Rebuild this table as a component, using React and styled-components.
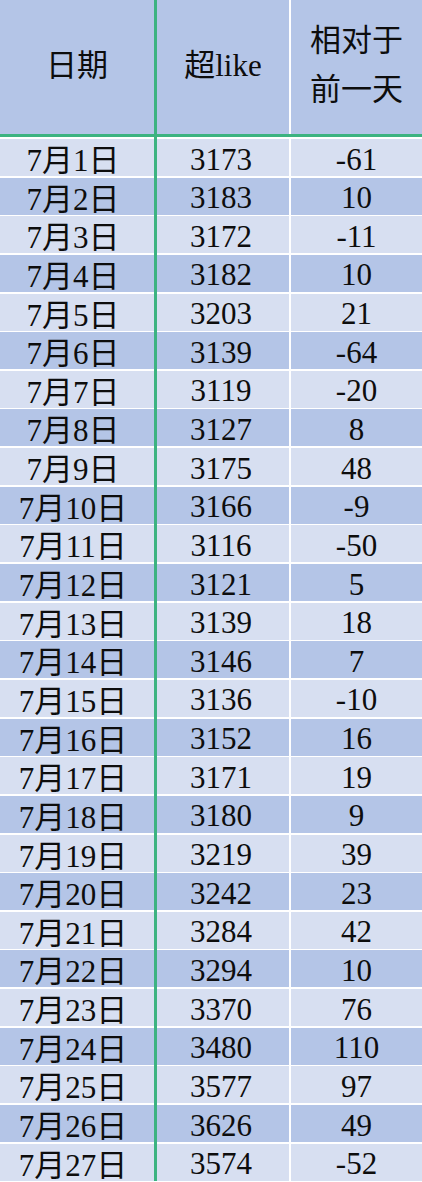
import React from "react";
import styled, { createGlobalStyle } from "styled-components";

const GREEN = "#3cb381";
const DARK = "#b4c5e7";
const LIGHT = "#d7dff1";

const Global = createGlobalStyle`
  html, body { margin: 0; padding: 0; background: #ffffff; }
  body { width: 422px; height: 1182px; overflow: hidden; }
`;

const Table = styled.div`
  width: 422px;
  display: grid;
  row-gap: 2px;
  background: linear-gradient(90deg, #ffffff 0 154px, ${GREEN} 154px 157px, #ffffff 157px);
  font-family: "Liberation Serif", "Noto Sans CJK SC", serif;
  color: #0d0d0d;
`;

const HeaderRow = styled.div`
  display: grid;
  grid-template-columns: 157px 134px 1fr;
  height: 134px;
  border-bottom: 3px solid ${GREEN};
`;

const Row = styled.div`
  display: grid;
  grid-template-columns: 157px 134px 1fr;
  height: 36.65px;
`;

const Cell = styled.div`
  box-sizing: border-box;
  display: flex;
  align-items: center;
  justify-content: center;
  text-align: center;
  background: ${(p) => p.$bg};
  border-right: ${(p) => (p.$divider ? `${p.$divider.w}px solid ${p.$divider.c}` : "none")};
  font-size: 31px;
  white-space: nowrap;
  min-width: 0;
`;

const HeadCell = styled(Cell)`
  padding-bottom: 6px;
`;

const DataCell = styled(Cell)`
  padding-top: 3px;
  padding-right: ${(p) => p.$pr || 0}px;
`;

const HeadText = styled.span`
  line-height: 46px;
`;

const Text = styled.span`
  font-family: "Liberation Serif", serif;
  line-height: 1;
`;

const Han = styled.span`
  font-family: "Noto Sans CJK SC", sans-serif;
`;

const HanInline = styled(Han)`
  display: inline-block;
  line-height: 1;
`;

const Latin = styled.span`
  font-family: "Liberation Serif", serif;
`;

const data = [
  [3173, -61], [3183, 10], [3172, -11], [3182, 10], [3203, 21], [3139, -64],
  [3119, -20], [3127, 8], [3175, 48], [3166, -9], [3116, -50], [3121, 5],
  [3139, 18], [3146, 7], [3136, -10], [3152, 16], [3171, 19], [3180, 9],
  [3219, 39], [3242, 23], [3284, 42], [3294, 10], [3370, 76], [3480, 110],
  [3577, 97], [3626, 49], [3574, -52],
];

const greenDiv = { w: 3, c: GREEN };
const whiteDiv = { w: 2, c: "#ffffff" };

export default function App() {
  return (
    <>
      <Global />
      <Table>
        <HeaderRow>
          <HeadCell $bg={DARK} $divider={greenDiv}>
            <HeadText>
              <Han>日期</Han>
            </HeadText>
          </HeadCell>
          <HeadCell $bg={DARK} $divider={whiteDiv}>
            <HeadText>
              <Han>超</Han>
              <Latin>like</Latin>
            </HeadText>
          </HeadCell>
          <HeadCell $bg={DARK}>
            <HeadText>
              <Han>
                相对于
                <br />
                前一天
              </Han>
            </HeadText>
          </HeadCell>
        </HeaderRow>
        {data.map(([v, d], i) => {
          const bg = i % 2 === 0 ? LIGHT : DARK;
          return (
            <Row key={i}>
              <DataCell $bg={bg} $divider={greenDiv} $pr={8}>
                <Text>
                  7<HanInline>月</HanInline>
                  {i + 1}
                  <HanInline>日</HanInline>
                </Text>
              </DataCell>
              <DataCell $bg={bg} $divider={whiteDiv} $pr={4}>
                <Text>{v}</Text>
              </DataCell>
              <DataCell $bg={bg}>
                <Text>{d}</Text>
              </DataCell>
            </Row>
          );
        })}
      </Table>
    </>
  );
}
